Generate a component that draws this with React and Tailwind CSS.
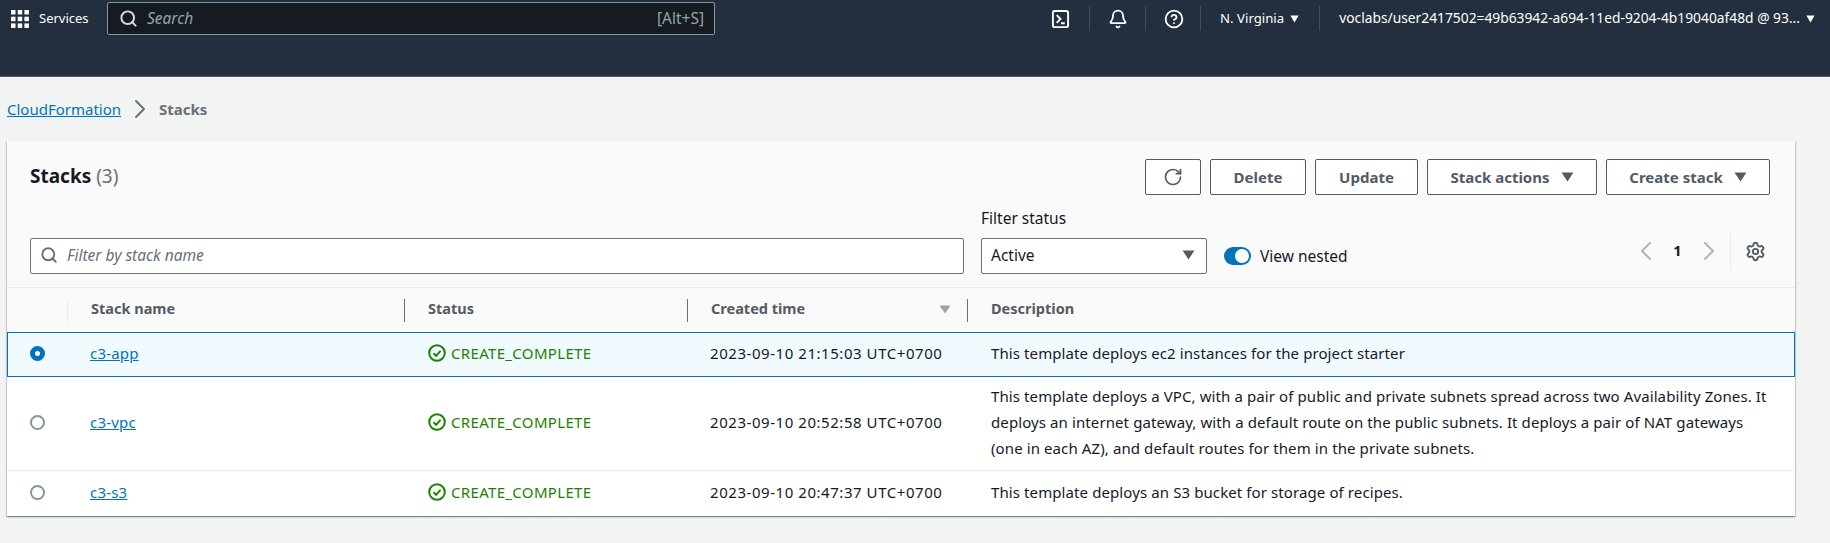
import { Search, RotateCw, ChevronLeft, ChevronRight, Settings, Bell, CircleHelp } from "lucide-react";

const stacks = [
  {
    name: "c3-app",
    time: "2023-09-10 21:15:03 UTC+0700",
    desc: "This template deploys ec2 instances for the project starter",
    selected: true,
  },
  {
    name: "c3-vpc",
    time: "2023-09-10 20:52:58 UTC+0700",
    desc: "This template deploys a VPC, with a pair of public and private subnets spread across two Availability Zones. It deploys an internet gateway, with a default route on the public subnets. It deploys a pair of NAT gateways (one in each AZ), and default routes for them in the private subnets.",
  },
  {
    name: "c3-s3",
    time: "2023-09-10 20:47:37 UTC+0700",
    desc: "This template deploys an S3 bucket for storage of recipes.",
  },
];

const Caret = ({ className }) => (
  <svg viewBox="0 0 12 10" className={className} fill="currentColor" preserveAspectRatio="none">
    <path d="M0.5 0.5h11L6 9.5z" />
  </svg>
);

const CheckCircle = () => (
  <svg viewBox="0 0 18 18" className="w-[18px] h-[18px] shrink-0" fill="none" stroke="#1d8102" strokeWidth="2">
    <circle cx="9" cy="9" r="7.8" />
    <path d="M5.5 9.2l2.6 2.6 4.5-5" />
  </svg>
);

const Button = ({ children, className = "" }) => (
  <button className={`h-[36px] flex items-center justify-center border border-[#545b64] rounded-[2px] bg-white text-[15px] font-bold text-[#545b64] ${className}`}>
    {children}
  </button>
);

const HeaderSep = () => <div className="w-px h-[25px] bg-[#414d5c]" />;

const ColHead = ({ children, className = "", sep = true }) => (
  <div className={`h-[23px] flex items-center pl-[23px] pb-[2px] border-l ${sep ? "border-[#687078]" : "border-[#eaeded]"} text-[14.5px] font-bold text-[#545b64] ${className}`}>
    {children}
  </div>
);

const App = () => {
  return (
    <div className="h-[543px] bg-[#f2f3f3] overflow-hidden font-['Noto_Sans',sans-serif]">
      {/* Top nav */}
      <header className="h-[77px] bg-[#232f3e] border-b border-[#545b64] flex items-start pt-[2px] text-white">
        <div className="flex items-center h-[33px] pl-[11px]">
          <svg viewBox="0 0 18 18" className="w-[18px] h-[18px]" fill="#fff">
            <rect x="0" y="0" width="4.5" height="4.5" />
            <rect x="6.7" y="0" width="4.5" height="4.5" />
            <rect x="13.4" y="0" width="4.5" height="4.5" />
            <rect x="0" y="6.7" width="4.5" height="4.5" />
            <rect x="6.7" y="6.7" width="4.5" height="4.5" />
            <rect x="13.4" y="6.7" width="4.5" height="4.5" />
            <rect x="0" y="13.4" width="4.5" height="4.5" />
            <rect x="6.7" y="13.4" width="4.5" height="4.5" />
            <rect x="13.4" y="13.4" width="4.5" height="4.5" />
          </svg>
          <span className="ml-[10px] w-[50px] text-[13px]">Services</span>
        </div>
        <div className="ml-[18px] w-[608px] h-[33px] bg-[#161b22] border border-[#879596] rounded-[2px] flex items-center pl-[11px] pr-[10px]">
          <Search className="w-[19px] h-[19px] text-[#d5dbdb]" strokeWidth={2.5} />
          <span className="ml-[9px] italic text-[15.5px] text-[#95a5a6]">Search</span>
          <span className="ml-auto text-[15.5px] text-[#95a5a6]">[Alt+S]</span>
        </div>
        <div className="ml-auto flex items-center h-[33px] pr-[15px]">
          <svg viewBox="0 0 20 20" className="w-[19px] h-[20px] mr-[19px]" fill="none" stroke="#fff" strokeWidth="2">
            <rect x="2" y="1.5" width="16" height="17" rx="2" />
            <path d="M6 6l4 4-4 4M10.5 14.5h4" />
          </svg>
          <HeaderSep />
          <Bell className="w-[20px] h-[20px] ml-[18px] mr-[17px]" strokeWidth={2.2} />
          <HeaderSep />
          <CircleHelp className="w-[20px] h-[20px] ml-[18px] mr-[16px]" strokeWidth={2.2} />
          <HeaderSep />
          <span className="ml-[19px] text-[13.2px]">N. Virginia</span>
          <Caret className="ml-[6px] w-[9px] h-[8px]" />
          <div className="ml-[20px]"><HeaderSep /></div>
          <span className="ml-[19px] text-[13.8px]">voclabs/user2417502=49b63942-a694-11ed-9204-4b19040af48d @ 93...</span>
          <Caret className="ml-[6px] w-[9px] h-[8px]" />
        </div>
      </header>

      {/* Breadcrumb */}
      <nav className="h-[64px] pl-[7px] flex items-center text-[15px]">
        <a className="w-[115px] text-[#0073bb] underline">CloudFormation</a>
        <ChevronRight className="w-[32px] h-[32px] ml-[2px] text-[#687078]" strokeWidth={1.5} />
        <span className="ml-[3px] font-bold text-[#687078]">Stacks</span>
      </nav>

      {/* Stacks table */}
      <section className="ml-[7px] w-[1788px] bg-white shadow-[0_1px_1px_0_rgba(0,28,36,0.3),1px_1px_1px_0_rgba(0,28,36,0.15),-1px_1px_1px_0_rgba(0,28,36,0.15)]">
        <div className="bg-[#fafafa]">
          <div className="flex items-start justify-between pt-[18px] pl-[23px] pr-[25px]">
            <h1 className="mt-[3px] text-[19px] font-bold text-[#16191f]">
              Stacks <span className="font-normal text-[#687078]">(3)</span>
            </h1>
            <div className="flex gap-[9px]">
              <Button className="w-[56px]">
                <RotateCw className="w-[20px] h-[20px]" strokeWidth={2} />
              </Button>
              <Button className="w-[96px]">Delete</Button>
              <Button className="w-[103px]">Update</Button>
              <Button className="w-[170px] gap-[11px]">
                Stack actions <Caret className="w-[13px] h-[10px]" />
              </Button>
              <Button className="w-[164px] gap-[11px]">
                Create stack <Caret className="w-[13px] h-[10px]" />
              </Button>
            </div>
          </div>
          <div className="flex items-end pl-[23px] pr-[23px] pb-[13px] mt-[12px]">
            <div className="w-[934px] h-[36px] bg-white border border-[#687078] rounded-[2px] flex items-center pl-[9px] pb-[2px]">
              <Search className="w-[18px] h-[18px] text-[#687078]" strokeWidth={2.5} />
              <span className="ml-[9px] italic text-[15.5px] text-[#687078]">Filter by stack name</span>
            </div>
            <div className="ml-[17px] w-[226px]">
              <div className="mb-[8px] text-[15.5px] text-[#16191f]">Filter status</div>
              <div className="h-[36px] bg-white border border-[#687078] rounded-[2px] flex items-center px-[9px] pb-[2px] text-[15.5px] text-[#16191f]">
                Active
                <Caret className="ml-auto mr-[2px] w-[13px] h-[10px] text-[#545b64]" />
              </div>
            </div>
            <div className="ml-[17px] h-[36px] flex items-center">
              <span className="w-[27px] h-[18px] rounded-full bg-[#0073bb] flex items-center justify-end pr-[2px]">
                <span className="w-[14px] h-[14px] rounded-full bg-white" />
              </span>
              <span className="ml-[9px] text-[15.5px] text-[#16191f]">View nested</span>
            </div>
            <div className="ml-auto mr-[6px] h-[36px] flex items-center -translate-y-[5px]">
              <ChevronLeft className="w-[32px] h-[32px] text-[#aab7b8]" strokeWidth={1.5} />
              <span className="w-[31px] text-center text-[14.5px] font-bold text-[#16191f]">1</span>
              <ChevronRight className="w-[32px] h-[32px] text-[#aab7b8]" strokeWidth={1.5} />
              <div className="ml-[5px] w-px h-[36px] bg-[#eaeded]" />
              <Settings className="ml-[14px] w-[21px] h-[21px] text-[#545b64]" strokeWidth={2.2} />
            </div>
          </div>
        </div>

        <div className="h-[45px] bg-[#fafafa] border-t border-[#eaeded] grid grid-cols-[60px_337px_283px_280px_1fr] items-center">
          <div />
          <ColHead sep={false}>Stack name</ColHead>
          <ColHead>Status</ColHead>
          <ColHead className="justify-between pr-[16px]">
            Created time
            <Caret className="w-[12px] h-[9px] text-[#95a5a6]" />
          </ColHead>
          <ColHead>Description</ColHead>
        </div>

        {stacks.map((s, i) => (
          <div
            key={s.name}
            className={`grid items-center text-[15px] pb-[3px] ${
              s.selected
                ? "h-[45px] grid-cols-[82px_338px_282px_281px_1fr] bg-[#f1faff] border border-[#0073bb]"
                : "grid-cols-[83px_338px_282px_281px_1fr] border-b border-[#eaeded] last:border-b-0"
            } ${i === 1 ? "h-[94px]" : ""} ${i === 2 ? "h-[45px]" : ""}`}
          >
            <div className={s.selected ? "pl-[22px]" : "pl-[23px]"}>
              {s.selected ? (
                <span className="block w-[15px] h-[15px] rounded-full border-[5px] border-[#0073bb] bg-white" />
              ) : (
                <span className="block w-[15px] h-[15px] rounded-full border-2 border-[#879596] bg-white" />
              )}
            </div>
            <a className="w-fit text-[#0073bb] underline tracking-[0.2px]">{s.name}</a>
            <div className="flex items-center gap-[5px] text-[#1d8102] tracking-[0.33px]">
              <CheckCircle />
              CREATE_COMPLETE
            </div>
            <div className="text-[#16191f] tracking-[0.55px]">{s.time}</div>
            <div className="w-[782px] text-[#16191f] leading-[26px] tracking-[0.1px]">{s.desc}</div>
          </div>
        ))}
      </section>
    </div>
  );
};

export default App;
